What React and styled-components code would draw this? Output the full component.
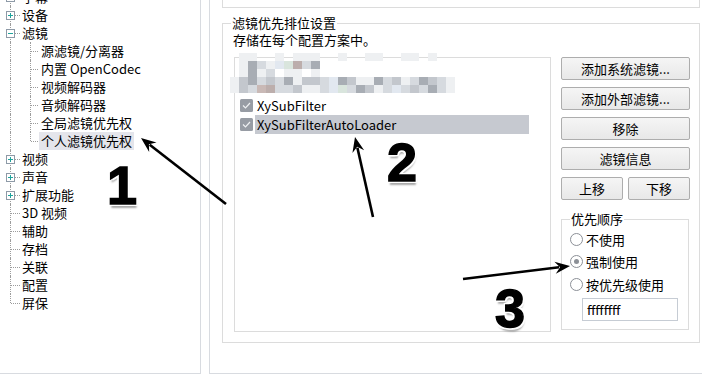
import React from 'react'
import styled, { createGlobalStyle } from 'styled-components'

const GlobalStyle = createGlobalStyle`
  html, body {
    margin: 0;
    padding: 0;
    background: #fff;
  }
  body {
    font-family: "Noto Sans CJK SC", "Noto Sans", sans-serif;
    font-size: 13px;
    color: #000;
  }
`

const treeItems = [
  { label: '字幕', box: '+' },
  { label: '设备', box: '+' },
  { label: '滤镜', box: '-' },
  { label: '源滤镜/分离器', child: true },
  { label: '内置 OpenCodec', child: true },
  { label: '视频解码器', child: true },
  { label: '音频解码器', child: true },
  { label: '全局滤镜优先权', child: true },
  { label: '个人滤镜优先权', child: true, last: true, selected: true },
  { label: '视频', box: '+' },
  { label: '声音', box: '+' },
  { label: '扩展功能', box: '+' },
  { label: '3D 视频' },
  { label: '辅助' },
  { label: '存档' },
  { label: '关联' },
  { label: '配置' },
  { label: '屏保', last: true }
]

// pixelated (blurred out) area at the top of the list
const mosaicRows = [
  '.aa..a.aaa..a..aa..aa.a..',
  '.adbagfebd...............',
  '.adab.aa.a...............',
  'acdbcbdaccbgdcaadbcabdcba',
  'acbhebbcaabgfbdcabgbcbdba'
]
const mosaicColors = {
  a: '#eef0f2',
  b: '#d6dadf',
  c: '#c3c7cd',
  d: '#a8adb4',
  e: '#bcaeac',
  f: '#d9e5dd',
  g: '#e2e8f0',
  h: '#c9b9b6'
}

const Screen = styled.div`
  position: relative;
  width: 702px;
  height: 379px;
  overflow: hidden;
`

const Layout = styled.div`
  display: flex;
  gap: 8px;
  margin-top: -20px;
  height: 394px;
`

const TreePanel = styled.div`
  flex: none;
  width: 201px;
  box-sizing: border-box;
  padding-top: 8px;
  border-right: 1px solid #d8dbe0;
  border-bottom: 1px solid #d8dbe0;
  overflow: hidden;
`

const TreeRow = styled.div`
  display: flex;
  align-items: center;
  height: 18px;
`

const Guide = styled.span`
  position: relative;
  flex: none;
  width: 20px;
  height: 18px;
  &::before {
    content: '';
    position: absolute;
    left: 10px;
    top: 0;
    height: ${p => (p.$half ? '9px' : '18px')};
    border-left: 1px dotted #9c9c9c;
  }
  &::after {
    content: '';
    display: ${p => (p.$stub ? 'block' : 'none')};
    position: absolute;
    left: 11px;
    top: 9px;
    width: ${p => (p.$short ? '7px' : '9px')};
    border-top: 1px dotted #9c9c9c;
  }
`

const Expander = styled.svg`
  position: absolute;
  left: 6px;
  top: 5px;
  width: 9px;
  height: 9px;
  z-index: 1;
`

const TreeLabel = styled.span`
  padding: 0 2px;
  margin-left: ${p => (p.$child ? '-1px' : '0')};
  line-height: 18px;
  white-space: nowrap;
  background: ${p => (p.$selected ? '#e4e5eb' : 'transparent')};
`

const PagePanel = styled.div`
  flex: 1;
  margin-right: -20px;
  padding-left: 12px;
  border-left: 1px solid #d8dbe0;
  border-bottom: 1px solid #d8dbe0;
`

const UpperGroup = styled.div`
  width: 478px;
  height: 28px;
  box-sizing: border-box;
  border: 1px solid #dcdcdc;
  border-top: none;
`

const GroupBox = styled.div`
  position: relative;
  box-sizing: border-box;
  width: ${p => p.$width}px;
  height: ${p => p.$height}px;
  margin-top: ${p => p.$top}px;
  border: 1px solid #dcdcdc;
  padding: ${p => p.$pad};
`

const Legend = styled.span`
  position: absolute;
  top: -9px;
  left: 8px;
  padding: 0 1px;
  line-height: 16px;
  background: #fff;
  white-space: nowrap;
`

const Subtitle = styled.div`
  line-height: 18px;
`

const GroupBody = styled.div`
  display: flex;
  gap: 10px;
  margin-top: 8px;
`

const ListBox = styled.div`
  flex: none;
  width: 317px;
  height: 275px;
  margin-left: 1px;
  box-sizing: border-box;
  border: 1px solid #dcdcdc;
`

const MosaicWrap = styled.div`
  display: flow-root;
  height: 38px;
  svg {
    display: block;
    margin: -5px 0 0 -5px;
  }
`

const ListItem = styled.div`
  display: flex;
  align-items: center;
  height: 19px;
  padding-left: 5px;
`

const CheckMark = styled.svg`
  flex: none;
  width: 13px;
  height: 13px;
`

const ItemLabel = styled.span`
  width: 274px;
  margin-left: 2px;
  padding-left: 2px;
  line-height: 19px;
  box-sizing: border-box;
  background: ${p => (p.$selected ? '#c6c9d0' : 'transparent')};
`

const ButtonColumn = styled.div`
  display: flex;
  flex-direction: column;
  gap: 7px;
  width: 129px;
`

const ButtonRow = styled.div`
  display: flex;
  gap: 5px;
`

const Button = styled.div`
  flex: 1;
  height: 23px;
  box-sizing: border-box;
  border: 1px solid #adadad;
  border-radius: 2px;
  background: linear-gradient(#f5f5f5, #e8e8e8);
  text-align: center;
  line-height: 21px;
  white-space: nowrap;
`

const RadioList = styled.div`
  display: flex;
  flex-direction: column;
`

const RadioRow = styled.div`
  display: flex;
  align-items: center;
  height: 22.5px;
`

const RadioDot = styled.span`
  position: relative;
  flex: none;
  width: 13px;
  height: 13px;
  box-sizing: border-box;
  border: 1px solid #8c9097;
  border-radius: 50%;
  background: #fff;
  margin-right: 3px;
  &::after {
    content: '';
    display: ${p => (p.$checked ? 'block' : 'none')};
    position: absolute;
    left: 3px;
    top: 3px;
    width: 5px;
    height: 5px;
    border-radius: 50%;
    background: #8c9097;
  }
`

const TextInput = styled.div`
  width: 96px;
  height: 23px;
  margin: 2.5px 0 0 12px;
  box-sizing: border-box;
  border: 1px solid #c6ccd4;
  padding-left: 4px;
  line-height: 21px;
`

const Annotations = styled.svg`
  position: absolute;
  left: 0;
  top: 0;
  width: 702px;
  height: 379px;
  pointer-events: none;
`

const Badge = styled.span`
  position: absolute;
  left: ${p => p.$x}px;
  top: ${p => p.$y}px;
  width: 40px;
  text-align: center;
  font-family: "Liberation Sans", Arial, sans-serif;
  font-weight: 700;
  font-size: 54px;
  line-height: 54px;
  color: #000;
  -webkit-text-stroke: 1.5px #000;
  text-shadow:
    2px 0 #fff, -2px 0 #fff, 0 2px #fff, 0 -2px #fff,
    2px 2px #fff, -2px 2px #fff, 2px -2px #fff, -2px -2px #fff,
    1px 4px 2px rgba(0, 0, 0, 0.35);
  pointer-events: none;
`

function headPoints (x1, y1, x2, y2) {
  const dx = x2 - x1
  const dy = y2 - y1
  const len = Math.hypot(dx, dy)
  const ux = dx / len
  const uy = dy / len
  const bx = x2 - ux * 15
  const by = y2 - uy * 15
  const nx = x2 - ux * 10
  const ny = y2 - uy * 10
  return [
    [x2, y2],
    [bx - uy * 6, by + ux * 6],
    [nx, ny],
    [bx + uy * 6, by - ux * 6]
  ].map(p => p.join(',')).join(' ')
}

const arrows = [
  [226, 204, 141, 138],
  [373, 217, 355, 137],
  [463, 279, 570, 266]
]

function TreeExpander ({ sign }) {
  return (
    <Expander viewBox='0 0 9 9'>
      <rect x='0.5' y='0.5' width='8' height='8' fill='#fff' stroke='#8e9aa7' />
      <line x1='2' y1='4.5' x2='7' y2='4.5' stroke='#1fa39c' />
      {sign === '+' && <line x1='4.5' y1='2' x2='4.5' y2='7' stroke='#1fa39c' />}
    </Expander>
  )
}

function Tree () {
  return (
    <TreePanel>
      {treeItems.map(item => (
        <TreeRow key={item.label}>
          {item.child
            ? (
              <>
                <Guide />
                <Guide $half={item.last} $stub $short />
              </>
              )
            : (
              <Guide $half={item.last} $stub>
                {item.box && <TreeExpander sign={item.box} />}
              </Guide>
              )}
          <TreeLabel $child={item.child} $selected={item.selected}>{item.label}</TreeLabel>
        </TreeRow>
      ))}
    </TreePanel>
  )
}

function Mosaic () {
  return (
    <MosaicWrap>
      <svg width='225' height='40' viewBox='0 0 225 40'>
        {mosaicRows.map((row, r) => row.split('').map((c, i) => (
          c === '.' ? null : <rect key={r + '-' + i} x={i * 9} y={r * 8} width='9' height='8' fill={mosaicColors[c]} />
        )))}
      </svg>
    </MosaicWrap>
  )
}

function CheckBox () {
  return (
    <CheckMark viewBox='0 0 13 13'>
      <rect x='0' y='0' width='13' height='13' rx='1.5' fill='#979ca4' />
      <polyline points='3,6.5 5.5,9 10,4' fill='none' stroke='#eef0f2' strokeWidth='1.2' />
    </CheckMark>
  )
}

export default function App () {
  return (
    <Screen>
      <GlobalStyle />
      <Layout>
        <Tree />
        <PagePanel>
          <UpperGroup />
          <GroupBox $width={478} $height={320} $top={15} $pad='7px 9px 0 10px'>
            <Legend>滤镜优先排位设置</Legend>
            <Subtitle>存储在每个配置方案中。</Subtitle>
            <GroupBody>
              <ListBox>
                <Mosaic />
                <ListItem>
                  <CheckBox />
                  <ItemLabel>XySubFilter</ItemLabel>
                </ListItem>
                <ListItem>
                  <CheckBox />
                  <ItemLabel $selected>XySubFilterAutoLoader</ItemLabel>
                </ListItem>
              </ListBox>
              <div>
                <ButtonColumn>
                  <Button>添加系统滤镜...</Button>
                  <Button>添加外部滤镜...</Button>
                  <Button>移除</Button>
                  <Button>滤镜信息</Button>
                  <ButtonRow>
                    <Button>上移</Button>
                    <Button>下移</Button>
                  </ButtonRow>
                </ButtonColumn>
                <GroupBox $width={128} $height={111} $top={19} $pad='8px 0 0 8px'>
                  <Legend>优先顺序</Legend>
                  <RadioList>
                    <RadioRow><RadioDot />不使用</RadioRow>
                    <RadioRow><RadioDot $checked />强制使用</RadioRow>
                    <RadioRow><RadioDot />按优先级使用</RadioRow>
                  </RadioList>
                  <TextInput>ffffffff</TextInput>
                </GroupBox>
              </div>
            </GroupBody>
          </GroupBox>
        </PagePanel>
      </Layout>
      <Annotations viewBox='0 0 702 379'>
        {arrows.map(([x1, y1, x2, y2]) => {
          const len = Math.hypot(x2 - x1, y2 - y1)
          const ex = x2 - (x2 - x1) / len * 11
          const ey = y2 - (y2 - y1) / len * 11
          return (
            <g key={x1}>
              <line x1={x1} y1={y1} x2={ex} y2={ey} stroke='#000' strokeWidth='2.6' />
              <polygon points={headPoints(x1, y1, x2, y2)} fill='#000' />
            </g>
          )
        })}
      </Annotations>
      <Badge $x={102} $y={158}>1</Badge>
      <Badge $x={382} $y={135}>2</Badge>
      <Badge $x={490} $y={281}>3</Badge>
    </Screen>
  )
}
